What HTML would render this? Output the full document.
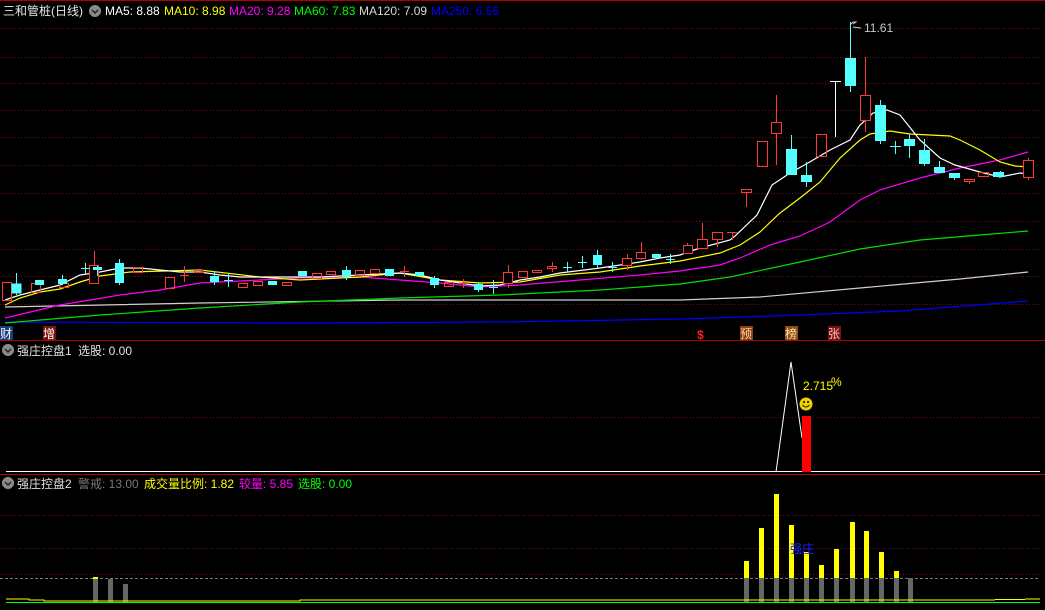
<!DOCTYPE html>
<html><head><meta charset="utf-8"><style>
html,body{margin:0;padding:0;background:#000;width:1045px;height:610px;overflow:hidden}
svg{display:block}
text{font-family:"Liberation Sans","Noto Sans CJK SC",sans-serif;font-size:12px}
</style></head><body>
<svg width="1045" height="610" viewBox="0 0 1045 610" shape-rendering="crispEdges">
<rect width="1045" height="610" fill="#000"/>
<line x1="0" y1="0.5" x2="1045" y2="0.5" stroke="#b00000"/>
<g stroke="#6e1010" stroke-dasharray="1,2">
<line x1="0" y1="28.5" x2="1040" y2="28.5"/><line x1="0" y1="57.5" x2="1040" y2="57.5"/>
<line x1="0" y1="83.5" x2="1040" y2="83.5"/><line x1="0" y1="110.5" x2="1040" y2="110.5"/>
<line x1="0" y1="137.5" x2="1040" y2="137.5"/><line x1="0" y1="165.5" x2="1040" y2="165.5"/>
<line x1="0" y1="193.5" x2="1040" y2="193.5"/><line x1="0" y1="221.5" x2="1040" y2="221.5"/>
<line x1="0" y1="249.5" x2="1040" y2="249.5"/><line x1="0" y1="276.5" x2="1040" y2="276.5"/>
<line x1="0" y1="304.5" x2="1040" y2="304.5"/>
<line x1="0" y1="417.5" x2="1040" y2="417.5"/>
<line x1="0" y1="515.5" x2="1040" y2="515.5"/><line x1="0" y1="548.5" x2="1040" y2="548.5"/>
<line x1="0" y1="574.5" x2="1040" y2="574.5"/>
</g>
<line x1="0" y1="578.5" x2="1040" y2="578.5" stroke="#777" stroke-dasharray="3,2"/>
<line x1="0" y1="340.5" x2="1045" y2="340.5" stroke="#b00000"/>
<line x1="0" y1="474.5" x2="1045" y2="474.5" stroke="#b00000"/>

<!-- MA lines -->
<g fill="none" stroke-width="1.2" shape-rendering="auto">
<polyline stroke="#0000ff" points="5,322 300,323 500,322 680,319 800,315 900,311 1028,301"/>
<polyline stroke="#d0d0d0" points="5,307 200,303 400,300 680,300 760,297 860,288 960,279 1028,272"/>
<polyline stroke="#00e000" points="5,323 100,315 200,308 300,302 400,298 500,295 600,290 680,284 730,277 800,262 860,249 920,240 980,235 1028,231"/>
<polyline stroke="#ff00ff" points="5,318 60,305 120,295 160,290 200,283 260,280 300,278 360,277 400,280 440,283 480,287 520,285 580,280 640,275 680,271 720,265 740,258 770,245 800,236 830,222 860,200 880,190 920,178 960,168 1000,160 1028,152"/>
<polyline stroke="#ffff00" points="5,305 20,298 40,292 60,289 80,282 100,276 130,272 200,270 260,277 300,280 360,277 400,273 440,280 480,283 520,282 560,275 600,272 640,266 680,261 700,257 720,253 740,245 760,232 780,213 800,198 820,182 840,158 860,140 870,134 890,131 910,134 930,135 950,136 960,140 980,150 1000,162 1015,166 1028,167"/>
<polyline stroke="#ffffff" points="5,300 20,295 40,290 60,285 80,275 100,272 120,268 140,268 160,270 180,272 200,272 220,275 240,277 280,277 320,277 360,275 400,273 420,275 440,280 460,283 480,286 500,285 520,280 540,277 560,273 600,268 640,262 660,258 680,255 700,248 730,240 735,236 757,215 772,185 790,173 808,163 830,150 850,140 860,125 873,113 887,110 900,115 920,140 940,158 955,165 980,172 1000,177 1020,173 1028,174"/>
</g>

<!-- candles -->
<g id="c">
<!-- red hollow: stroke #ff3030 ; cyan filled #54ffff -->
<g stroke="#ff3838" fill="none">
<rect x="2.5" y="282.5" width="9" height="18"/>
<rect x="31.5" y="283.5" width="9" height="9"/>
<rect x="59.5" y="283.5" width="9" height="4"/>
<line x1="94.5" y1="251" x2="94.5" y2="283"/><rect x="89.5" y="265.5" width="9" height="18" fill="#000"/>
<rect x="133.5" y="267.5" width="9" height="5"/>
<rect x="165.5" y="277.5" width="9" height="11"/>
<line x1="180" y1="275.5" x2="189" y2="275.5"/><line x1="184.5" y1="266" x2="184.5" y2="282"/>
<rect x="194.5" y="270.5" width="9" height="2"/>
<rect x="238.5" y="283.5" width="9" height="4"/>
<rect x="253.5" y="281.5" width="9" height="4"/>
<rect x="282.5" y="282.5" width="9" height="3"/>
<rect x="312.5" y="273.5" width="9" height="5"/>
<rect x="326.5" y="271.5" width="9" height="3"/>
<rect x="355.5" y="270.5" width="9" height="5"/>
<rect x="370.5" y="269.5" width="9" height="4"/>
<line x1="400" y1="271.5" x2="409" y2="271.5"/><line x1="404.5" y1="266" x2="404.5" y2="277"/>
<rect x="444.5" y="282.5" width="9" height="4"/>
<line x1="459" y1="283.5" x2="468" y2="283.5"/><line x1="463.5" y1="279" x2="463.5" y2="288"/>
<line x1="508.5" y1="265" x2="508.5" y2="288"/><rect x="503.5" y="272.5" width="9" height="11" fill="#000"/>
<rect x="518.5" y="271.5" width="9" height="6"/>
<rect x="532.5" y="270.5" width="9" height="2"/>
<line x1="552.5" y1="262" x2="552.5" y2="272"/><rect x="547.5" y="266.5" width="9" height="2" fill="#000"/>
<line x1="627.5" y1="254" x2="627.5" y2="270"/><rect x="622.5" y="258.5" width="9" height="7" fill="#000"/>
<line x1="641.5" y1="242" x2="641.5" y2="260"/><rect x="636.5" y="252.5" width="9" height="6" fill="#000"/>
<line x1="687.5" y1="243" x2="687.5" y2="254"/><rect x="683.5" y="245.5" width="9" height="8" fill="#000"/>
<line x1="702.5" y1="223" x2="702.5" y2="249"/><rect x="697.5" y="239.5" width="10" height="9" fill="#000"/>
<line x1="717.5" y1="232" x2="717.5" y2="247"/><rect x="712.5" y="232.5" width="10" height="7" fill="#000"/>
<line x1="727" y1="232.5" x2="737" y2="232.5"/><line x1="732.5" y1="232" x2="732.5" y2="240"/>
<line x1="746.5" y1="189" x2="746.5" y2="207"/><rect x="741.5" y="189.5" width="10" height="3" fill="#000"/>
<rect x="757.5" y="141.5" width="10" height="25"/>
<line x1="776.5" y1="95" x2="776.5" y2="165"/><rect x="771.5" y="122.5" width="10" height="11" fill="#000"/>
<rect x="816.5" y="134.5" width="10" height="22"/>
<line x1="865.5" y1="57" x2="865.5" y2="132"/><rect x="860.5" y="95.5" width="10" height="25" fill="#000"/>
<line x1="969.5" y1="179" x2="969.5" y2="184"/><rect x="964.5" y="179.5" width="10" height="2" fill="#000"/>
<rect x="978.5" y="172.5" width="10" height="4"/>
<line x1="1028.5" y1="158" x2="1028.5" y2="180"/><rect x="1023.5" y="160.5" width="10" height="17" fill="#000"/>
</g>
<g fill="#54ffff" stroke="#54ffff">
<line x1="16.5" y1="273" x2="16.5" y2="295"/><rect x="12" y="284" width="9" height="9"/>
<rect x="35" y="280" width="9" height="5" stroke="none"/>
<line x1="62.5" y1="275" x2="62.5" y2="285"/><rect x="58" y="279" width="9" height="5" stroke="none"/>
<line x1="81" y1="268.5" x2="90" y2="268.5"/><line x1="85.5" y1="263" x2="85.5" y2="274"/>
<line x1="97.5" y1="266" x2="97.5" y2="276"/><rect x="93" y="267" width="9" height="3" stroke="none"/>
<line x1="119.5" y1="259" x2="119.5" y2="285"/><rect x="115" y="263" width="9" height="20" stroke="none"/>
<line x1="214.5" y1="271" x2="214.5" y2="285"/><rect x="210" y="276" width="9" height="6" stroke="none"/>
<line x1="224" y1="280.5" x2="233" y2="280.5"/><line x1="228.5" y1="274" x2="228.5" y2="287"/>
<rect x="268" y="281" width="9" height="4" stroke="none"/>
<rect x="298" y="271" width="9" height="5" stroke="none"/>
<line x1="346.5" y1="266" x2="346.5" y2="280"/><rect x="342" y="270" width="9" height="7" stroke="none"/>
<rect x="385" y="269" width="9" height="7" stroke="none"/>
<rect x="415" y="272" width="9" height="4" stroke="none"/>
<line x1="434.5" y1="276" x2="434.5" y2="288"/><rect x="430" y="278" width="9" height="7" stroke="none"/>
<line x1="478.5" y1="282" x2="478.5" y2="292"/><rect x="474" y="284" width="9" height="6" stroke="none"/>
<line x1="489" y1="287.5" x2="498" y2="287.5"/><line x1="493.5" y1="280" x2="493.5" y2="294"/>
<line x1="563" y1="267.5" x2="572" y2="267.5"/><line x1="567.5" y1="262" x2="567.5" y2="272"/>
<line x1="578" y1="262.5" x2="587" y2="262.5"/><line x1="582.5" y1="256" x2="582.5" y2="268"/>
<line x1="597.5" y1="250" x2="597.5" y2="268"/><rect x="593" y="255" width="9" height="10" stroke="none"/>
<line x1="608" y1="267.5" x2="617" y2="267.5"/><line x1="612.5" y1="262" x2="612.5" y2="272"/>
<rect x="652" y="254" width="9" height="4" stroke="none"/>
<line x1="666" y1="259.5" x2="675" y2="259.5"/><line x1="670.5" y1="254" x2="670.5" y2="264"/>
<line x1="791.5" y1="135" x2="791.5" y2="175"/><rect x="786" y="149" width="11" height="26" stroke="none"/>
<line x1="806.5" y1="162" x2="806.5" y2="187"/><rect x="801" y="175" width="11" height="7" stroke="none"/>
<line x1="850.5" y1="22" x2="850.5" y2="92"/><rect x="845" y="58" width="11" height="28" stroke="none"/>
<line x1="880.5" y1="100" x2="880.5" y2="144"/><rect x="875" y="105" width="11" height="36" stroke="none"/>
<line x1="890" y1="146.5" x2="901" y2="146.5"/><line x1="895.5" y1="141" x2="895.5" y2="154"/>
<line x1="909.5" y1="134" x2="909.5" y2="158"/><rect x="904" y="139" width="11" height="7" stroke="none"/>
<line x1="924.5" y1="139" x2="924.5" y2="166"/><rect x="919" y="150" width="11" height="14" stroke="none"/>
<line x1="939.5" y1="161" x2="939.5" y2="173"/><rect x="934" y="167" width="11" height="6" stroke="none"/>
<line x1="954.5" y1="173" x2="954.5" y2="180"/><rect x="949" y="173" width="11" height="5" stroke="none"/>
<rect x="993" y="172" width="11" height="5" stroke="none"/>
<line x1="995" y1="176.5" x2="1005" y2="176.5"/><line x1="1000.5" y1="171" x2="1000.5" y2="177"/>
</g>
<g stroke="#ffffff"><line x1="835.5" y1="81" x2="835.5" y2="137"/><line x1="830" y1="81.5" x2="841" y2="81.5"/></g>
</g>
<g shape-rendering="auto"><polyline points="850,25 853,22 856,22 853,24" fill="none" stroke="#ccc"/><line x1="853" y1="27" x2="861" y2="28" stroke="#ccc"/></g>
<text x="864" y="32" fill="#c8c8c8">11.61</text>

<!-- header -->
<text x="3" y="15" fill="#e8e8e8" font-size="13">三和管桩(日线)</text>
<circle cx="95" cy="11" r="6" fill="#8a8a8a"/><path d="M92 10 L95 13 L98 10" stroke="#222" fill="none" stroke-width="1.5" shape-rendering="auto"/>
<text x="105" y="15" fill="#ffffff">MA5: 8.88</text>
<text x="164" y="15" fill="#ffff00">MA10: 8.98</text>
<text x="229" y="15" fill="#ff00ff">MA20: 9.28</text>
<text x="294" y="15" fill="#00ff00">MA60: 7.83</text>
<text x="359" y="15" fill="#d8d8d8">MA120: 7.09</text>
<text x="431" y="15" fill="#0000ff">MA250: 6.56</text>

<!-- markers -->
<rect x="0" y="326" width="13" height="14" fill="#1a3a7a"/><text x="0" y="338" fill="#fff">财</text>
<rect x="43" y="326" width="13" height="14" fill="#7a1010"/><text x="43" y="338" fill="#fff">增</text>
<text x="697" y="339" fill="#ff2020" font-weight="bold">$</text>
<rect x="740" y="326" width="13" height="14" fill="#8a4010"/><text x="740" y="338" fill="#ffd0a0">预</text>
<rect x="785" y="326" width="13" height="14" fill="#8a5010"/><text x="785" y="338" fill="#ffe0b0">榜</text>
<rect x="828" y="326" width="13" height="14" fill="#7a1010"/><text x="828" y="338" fill="#ffc0c0">张</text>

<!-- indicator 1 -->
<circle cx="8" cy="350" r="6" fill="#8a8a8a"/><path d="M5 349 L8 352 L11 349" stroke="#222" fill="none" stroke-width="1.5" shape-rendering="auto"/>
<text x="17" y="355" fill="#e0e0e0">强庄控盘1</text><text x="78" y="355" fill="#e0e0e0">选股: 0.00</text>
<line x1="6" y1="471.5" x2="1040" y2="471.5" stroke="#fff"/>
<polyline points="776,472 791,362 802,438" fill="none" stroke="#fff" shape-rendering="auto"/>
<rect x="802" y="416" width="9" height="56" fill="#ff0000"/>
<circle cx="806" cy="404" r="6.5" fill="#f0d000" shape-rendering="auto"/>
<circle cx="804" cy="402" r="0.9" fill="#000"/><circle cx="808" cy="402" r="0.9" fill="#000"/>
<path d="M802.5 405 Q806 409 809.5 405" fill="none" stroke="#000" stroke-width="0.9" shape-rendering="auto"/>
<text x="803" y="390" fill="#ffff00">2.715</text><text x="831" y="386" fill="#ffff00" font-size="11">%</text>

<!-- indicator 2 -->
<circle cx="8" cy="483" r="6" fill="#8a8a8a"/><path d="M5 482 L8 485 L11 482" stroke="#222" fill="none" stroke-width="1.5" shape-rendering="auto"/>
<text x="17" y="488" fill="#e0e0e0">强庄控盘2</text>
<text x="78" y="488" fill="#777">警戒: 13.00</text>
<text x="144" y="488" fill="#ffff00">成交量比例: 1.82</text>
<text x="239" y="488" fill="#ff00ff">较量: 5.85</text>
<text x="298" y="488" fill="#00ff00">选股: 0.00</text>

<g fill="#ffff00">
<rect x="744" y="561" width="5" height="17"/><rect x="759" y="528" width="5" height="50"/>
<rect x="774" y="494" width="5" height="84"/><rect x="789" y="525" width="5" height="53"/>
<rect x="804" y="552" width="5" height="26"/><rect x="819" y="565" width="5" height="13"/>
<rect x="834" y="549" width="5" height="29"/><rect x="850" y="522" width="5" height="56"/>
<rect x="864" y="531" width="5" height="47"/><rect x="879" y="552" width="5" height="26"/>
<rect x="894" y="571" width="5" height="7"/><rect x="93" y="577" width="5" height="2"/>
</g>
<g fill="#666">
<rect x="744" y="578" width="5" height="24"/><rect x="759" y="578" width="5" height="24"/>
<rect x="774" y="578" width="5" height="24"/><rect x="789" y="578" width="5" height="24"/>
<rect x="804" y="578" width="5" height="24"/><rect x="819" y="578" width="5" height="24"/>
<rect x="834" y="578" width="5" height="24"/><rect x="850" y="578" width="5" height="24"/>
<rect x="864" y="578" width="5" height="24"/><rect x="879" y="578" width="5" height="24"/>
<rect x="894" y="578" width="5" height="24"/><rect x="908" y="578" width="5" height="24"/>
<rect x="93" y="579" width="5" height="23"/><rect x="108" y="579" width="5" height="23"/>
<rect x="123" y="584" width="5" height="18"/>
</g>
<polyline points="6,599 29,599 29,600 44,600 44,601 300,601 300,600 700,600 900,600 980,600 1040,599" fill="none" stroke="#ffff00"/>
<line x1="6" y1="602.5" x2="1040" y2="602.5" stroke="#00ff00"/>
<text x="790" y="553" fill="#2020ff">强庄</text>
</svg>
</body></html>
